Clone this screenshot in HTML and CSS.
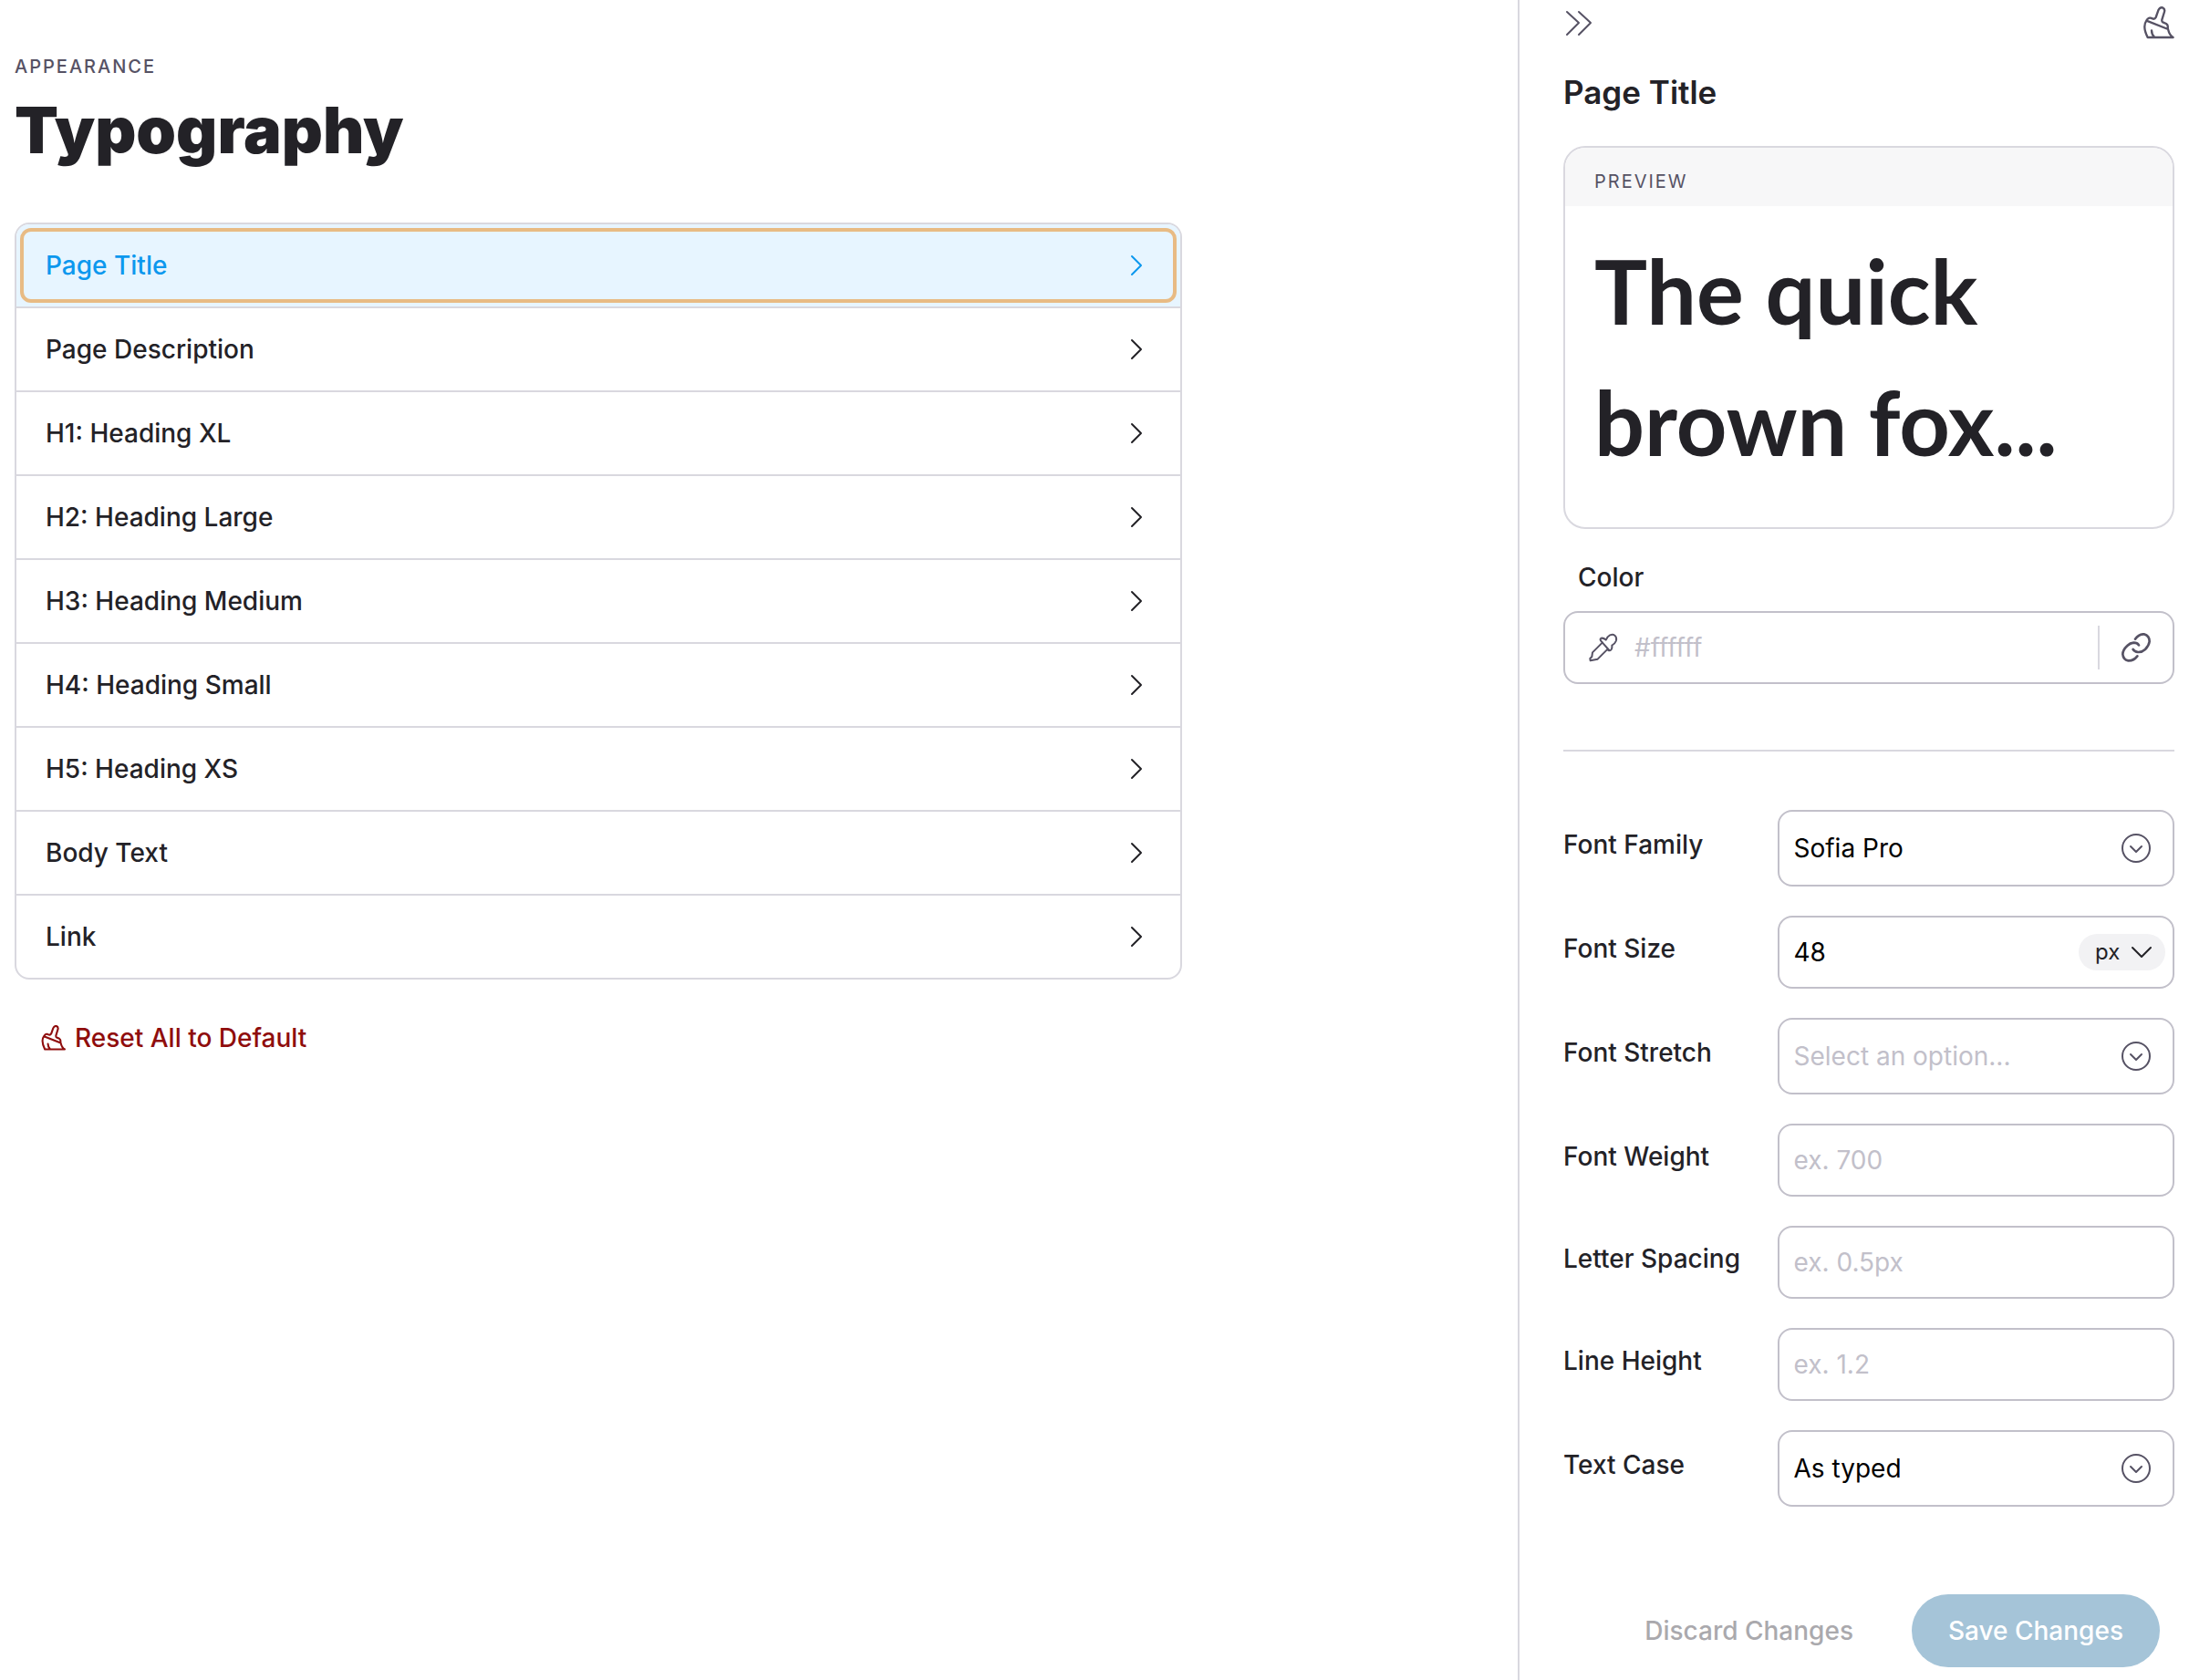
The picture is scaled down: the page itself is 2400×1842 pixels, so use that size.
FILE: index.html
```html
<!DOCTYPE html>
<html lang="en">
<head>
<meta charset="utf-8">
<title>Typography</title>
<meta name="viewport" content="width=device-width, initial-scale=1">
<link rel="stylesheet" href="styles.css">
</head>
<body>
<svg class="sprite" aria-hidden="true">
  <symbol id="chevron-right" viewBox="0 0 24 24"><path d="M7 2 17 12 7 22"/></symbol>
  <symbol id="chevron-down" viewBox="0 0 24 24"><path d="M2 7 12 17 22 7"/></symbol>
  <symbol id="circle-down" viewBox="0 0 32 32"><circle cx="16" cy="16" r="15"/><path d="M10 14 16 20 22 14"/></symbol>
  <symbol id="chevrons" viewBox="0 0 32 32"><path d="M4 4 17 16 4 29M17 4 30 16 17 29"/></symbol>
  <symbol id="brush" viewBox="60 20 108 108"><path d="M76 67Q82 56 89 58L98 61Q104 62 107 56L115 33Q120 22 129 24Q138 28 135 38L127 64Q126 70 130 72L141 77Q148 82 146 90L147 95 76 67Q62 86 80 122H164Q152 116 147 95M93 99Q93 112 102 121"/></symbol>
  <symbol id="dropper" viewBox="21 27 96 96"><path d="M63 56Q55 47 62 44Q70 43 77 50L83 40Q92 30 103 33Q115 40 110 54Q106 64 97 68Q98 76 95 81Q90 88 84 83M63 56 88 84M66 58 33 91 31 105 25 111 26 118 50 113 83 80"/></symbol>
  <symbol id="link" viewBox="78 42 96 96"><path d="M123 62Q135 45 152 46Q170 51 170 70Q168 84 156 96Q145 106 132 105Q120 103 116 96M135 82Q130 74 118 74Q106 75 97 84Q82 98 82 112Q84 130 100 133Q118 134 130 118"/></symbol>
</svg>

<div class="layout">
  <main class="main">
    <p class="eyebrow">APPEARANCE</p>
    <h1 class="title">Typography</h1>
    <div class="list">
      <button class="row row-active" type="button">Page Title<svg class="icon"><use href="#chevron-right"/></svg></button>
      <button class="row" type="button">Page Description<svg class="icon"><use href="#chevron-right"/></svg></button>
      <button class="row" type="button">H1: Heading XL<svg class="icon"><use href="#chevron-right"/></svg></button>
      <button class="row" type="button">H2: Heading Large<svg class="icon"><use href="#chevron-right"/></svg></button>
      <button class="row" type="button">H3: Heading Medium<svg class="icon"><use href="#chevron-right"/></svg></button>
      <button class="row" type="button">H4: Heading Small<svg class="icon"><use href="#chevron-right"/></svg></button>
      <button class="row" type="button">H5: Heading XS<svg class="icon"><use href="#chevron-right"/></svg></button>
      <button class="row" type="button">Body Text<svg class="icon"><use href="#chevron-right"/></svg></button>
      <button class="row" type="button">Link<svg class="icon"><use href="#chevron-right"/></svg></button>
    </div>
    <button class="reset" type="button"><svg class="icon icon-brush"><use href="#brush"/></svg>Reset All to Default</button>
  </main>

  <aside class="panel">
    <div class="panel-bar">
      <button class="icon-button" type="button" aria-label="Collapse panel"><svg class="icon icon-lg"><use href="#chevrons"/></svg></button>
      <button class="icon-button" type="button" aria-label="Reset to default"><svg class="icon icon-xl"><use href="#brush"/></svg></button>
    </div>
    <h2 class="panel-title">Page Title</h2>

    <section class="preview">
      <p class="preview-label">PREVIEW</p>
      <p class="preview-text">The quick brown fox...</p>
    </section>

    <label class="color-label" for="color">Color</label>
    <div class="color-field">
      <svg class="icon icon-lg"><use href="#dropper"/></svg>
      <input class="color-input" id="color" type="text" placeholder="#ffffff">
      <button class="link-button" type="button" aria-label="Link color"><svg class="icon icon-lg icon-link"><use href="#link"/></svg></button>
    </div>

    <hr class="rule">

    <form class="fields" id="style-form">
      <div class="field">
        <label for="family">Font Family</label>
        <div class="select-box">
          <select class="control select" id="family"><option>Sofia Pro</option></select>
          <svg class="icon icon-lg select-icon"><use href="#circle-down"/></svg>
        </div>
      </div>
      <div class="field">
        <label for="size">Font Size</label>
        <div class="control size-box">
          <input class="size-input" id="size" type="text" value="48">
          <div class="unit-box">
            <select class="unit" aria-label="Unit"><option>px</option></select>
            <svg class="icon unit-icon"><use href="#chevron-down"/></svg>
          </div>
        </div>
      </div>
      <div class="field">
        <label for="stretch">Font Stretch</label>
        <div class="select-box">
          <select class="control select select-empty" id="stretch"><option>Select an option...</option></select>
          <svg class="icon icon-lg select-icon"><use href="#circle-down"/></svg>
        </div>
      </div>
      <div class="field">
        <label for="weight">Font Weight</label>
        <input class="control" id="weight" type="text" placeholder="ex. 700">
      </div>
      <div class="field">
        <label for="spacing">Letter Spacing</label>
        <input class="control" id="spacing" type="text" placeholder="ex. 0.5px">
      </div>
      <div class="field">
        <label for="height">Line Height</label>
        <input class="control" id="height" type="text" placeholder="ex. 1.2">
      </div>
      <div class="field">
        <label for="case">Text Case</label>
        <div class="select-box">
          <select class="control select" id="case"><option>As typed</option></select>
          <svg class="icon icon-lg select-icon"><use href="#circle-down"/></svg>
        </div>
      </div>
    </form>

    <div class="actions">
      <button class="action" type="reset" form="style-form">Discard Changes</button>
      <button class="action action-save" type="submit" form="style-form">Save Changes</button>
    </div>
  </aside>
</div>
</body>
</html>
```
FILE: styles.css
```css
* { box-sizing: border-box; }

body {
  margin: 0;
  background: #fff;
  color: #232227;
  font: 500 28px/40px Inter, "Liberation Sans", sans-serif;
}

p, h1, h2 { margin: 0; }

button, input, select {
  margin: 0;
  padding: 0;
  border: 0;
  background: none;
  color: inherit;
  font: inherit;
}

input::placeholder { color: #c2c0ca; opacity: 1; }

.sprite { display: none; }

.icon {
  display: block;
  flex: none;
  width: 24px;
  height: 24px;
  fill: none;
  stroke: currentColor;
  stroke-width: 2;
  stroke-linecap: round;
  stroke-linejoin: round;
}
.icon-lg { width: 32px; height: 32px; color: #565264; }
.icon-xl { width: 36px; height: 36px; color: #565264; stroke-width: 7; }

.layout {
  display: grid;
  grid-template-columns: minmax(0, 1fr) 736px;
  min-height: 100vh;
}

/* Style list */
.main { padding: 56px 16px 16px; }

.eyebrow {
  color: #565264;
  font-weight: 500;
  font-size: 20px;
  line-height: 34px;
  letter-spacing: 2px;
}

.title {
  margin: 14px 0 60px;
  font-size: 70px;
  font-weight: 900;
  line-height: 78px;
  padding-bottom: 2px;
}

.list {
  max-width: 1280px;
  overflow: hidden;
  border: 2px solid #d9d8df;
  border-radius: 16px;
}

.row {
  display: flex;
  align-items: center;
  justify-content: space-between;
  width: 100%;
  height: 92px;
  padding: 0 36px 0 32px;
  border-bottom: 2px solid #d9d8df;
  text-align: left;
}
.row:last-child { height: 90px; border-bottom: 0; }

.row-active {
  position: relative;
  background: #e7f5ff;
  color: #0c98ee;
}
.row-active::after {
  content: "";
  position: absolute;
  inset: 4px;
  border: 4px solid #e8bb84;
  border-radius: 12px;
}

.reset {
  display: flex;
  align-items: center;
  gap: 10px;
  height: 48px;
  margin: 40px 0 0 28px;
  color: #8f0d0d;
}
.icon-brush { width: 28px; height: 28px; stroke-width: 8; }

/* Settings panel */
.panel {
  padding: 0 16px 14px 48px;
  border-left: 2px solid #d9d8df;
}

.panel-bar {
  display: flex;
  align-items: center;
  justify-content: space-between;
  height: 50px;
}

.icon-button { flex: none; }

.panel-title {
  margin: 28px 0 36px;
  font-size: 35px;
  font-weight: 600;
  line-height: 46px;
}

.preview {
  overflow: hidden;
  border: 2px solid #d9d8df;
  border-radius: 24px;
}

.preview-label {
  padding: 24px 32px 14px;
  background: #f7f7f8;
  color: #565264;
  font-weight: 400;
  font-size: 20px;
  line-height: 26px;
  letter-spacing: 2px;
}

.preview-text {
  padding: 21px 32px 43px;
  font: 700 97px/144px "Sofia Pro", Lato, sans-serif;
}

.color-label {
  display: block;
  margin: 32px 16px 16px;
  line-height: 42px;
}

.color-field {
  display: flex;
  align-items: center;
  gap: 18px;
  height: 80px;
  padding-left: 26px;
  border: 2px solid #c2c0ca;
  border-radius: 16px;
  font-weight: 400;
}
.color-field .icon { stroke-width: 6; }
.color-field .icon-link { stroke-width: 8; }

.color-input { flex: 1; min-width: 0; }

.link-button {
  display: grid;
  place-items: center;
  width: 82px;
  height: 48px;
  border-left: 2px solid #d9d8df;
}

.rule {
  height: 2px;
  margin: 72px 0 64px;
  border: 0;
  background: #d9d8df;
}

.fields { display: grid; gap: 32px; }

.field {
  display: grid;
  grid-template-columns: 35% 65%;
  align-items: center;
}
.field > label { padding-bottom: 8px; }

.control {
  width: 100%;
  height: 80px;
  padding: 0 16px;
  border: 2px solid #c2c0ca;
  border-radius: 16px;
  color: #000;
  font-weight: 400;
}

.select-box, .unit-box {
  display: grid;
  align-items: center;
}
.select-box > *, .unit-box > * { grid-area: 1 / 1; }

.select { height: 84px; appearance: none; }
.select-empty { color: #c2c0ca; }

.select-icon {
  justify-self: end;
  margin-right: 26px;
  pointer-events: none;
}

.size-box {
  display: flex;
  align-items: center;
  padding-right: 8px;
}
.size-input { flex: 1; min-width: 0; }

.unit {
  width: 95px;
  height: 40px;
  padding-left: 18px;
  border-radius: 20px;
  background: #f2f2f4;
  color: #232227;
  font-size: 24px;
  line-height: 32px;
  appearance: none;
}
.unit-icon {
  justify-self: end;
  margin-right: 14px;
  color: #232227;
  pointer-events: none;
}

.actions {
  display: flex;
  justify-content: flex-end;
  gap: 24px;
  margin: 96px 16px 0 0;
}

.action {
  height: 80px;
  padding: 0 40px;
  border-radius: 40px;
  color: #aaa9ad;
}
.action-save { background: #a5c4d8; color: #fff; }
```
